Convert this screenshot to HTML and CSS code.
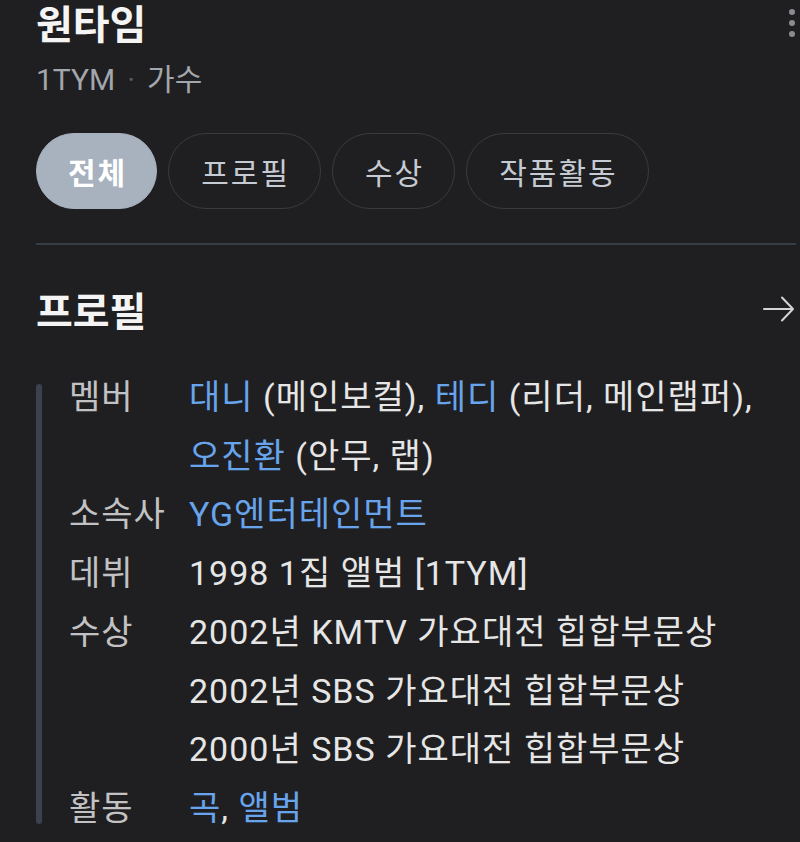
FILE: index.html
```html
<!DOCTYPE html>
<html lang="ko">
<head>
    <meta charset="UTF-8">
    <meta name="viewport" content="width=device-width, initial-scale=1.0">
    <title>원타임</title>
    <link rel="stylesheet" href="styles.css">
</head>
<body>
    <div id="page">
        <div id="header">
            <div id="title-block">
                <h1 id="title">원타임</h1>
                <div id="subtitle">1TYM<span class="dot">·</span>가수</div>
            </div>
            <div id="kebab">
                <span></span><span></span><span></span>
            </div>
        </div>

        <div id="tabs">
            <button class="chip active">전체</button>
            <button class="chip">프로필</button>
            <button class="chip">수상</button>
            <button class="chip">작품활동</button>
        </div>

        <div id="divider"></div>

        <div id="section-head">
            <h2>프로필</h2>
            <svg class="arrow" width="34" height="30" viewBox="0 0 34 30">
                <path d="M2 15 H31 M20 3.5 L31 15 L20 26.5" fill="none" stroke="#d4d4d4" stroke-width="2" stroke-linecap="round" stroke-linejoin="round"/>
            </svg>
        </div>

        <div id="profile">
            <div class="bar"></div>
            <div class="rows">
                <div class="row">
                    <div class="label">멤버</div>
                    <div class="value"><a>대니</a> (메인보컬), <a>테디</a> (리더, 메인랩퍼),<br><a>오진환</a> (안무, 랩)</div>
                </div>
                <div class="row">
                    <div class="label">소속사</div>
                    <div class="value"><a>YG엔터테인먼트</a></div>
                </div>
                <div class="row">
                    <div class="label">데뷔</div>
                    <div class="value">1998 1집 앨범 [1TYM]</div>
                </div>
                <div class="row">
                    <div class="label">수상</div>
                    <div class="value">2002년 KMTV 가요대전 힙합부문상<br>2002년 SBS 가요대전 힙합부문상<br>2000년 SBS 가요대전 힙합부문상</div>
                </div>
                <div class="row">
                    <div class="label">활동</div>
                    <div class="value"><a>곡</a>, <a>앨범</a></div>
                </div>
            </div>
        </div>
    </div>
</body>
</html>
```

FILE: styles.css
```css
body {
    margin: 0;
    background-color: #1f1f21;
    font-family: Roboto, "Noto Sans CJK KR", sans-serif;
    color: #e4e4e4;
}

#page {
    padding: 0 0 0 36px;
}

#header {
    display: flex;
    justify-content: space-between;
    align-items: flex-start;
}

#title {
    margin: 0;
    font-size: 40px;
    font-weight: 700;
    line-height: 52px;
    color: #f4f4f4;
}

#subtitle {
    font-size: 30px;
    line-height: 40px;
    color: #a2a6ad;
    margin-top: 8px;
}

#subtitle .dot {
    margin: 0 12px;
    color: #55585e;
}

#kebab {
    display: flex;
    flex-direction: column;
    gap: 5px;
    padding: 9px 5px 0 0;
}

#kebab span {
    width: 6px;
    height: 6px;
    border-radius: 50%;
    background-color: #8a8c90;
}

#tabs {
    display: flex;
    gap: 11px;
    margin-top: 33px;
}

.chip {
    height: 76px;
    padding: 0 30px 0 32px;
    border-radius: 38px;
    border: 1.5px solid #3a3b3f;
    background: none;
    color: #c6cbd3;
    font-family: "Noto Sans CJK KR", sans-serif;
    font-size: 30px;
    letter-spacing: 2px;
}

.chip.active {
    padding: 0 29px 0 31px;
    background-color: #a8b1be;
    border-color: #a8b1be;
    color: #ffffff;
    font-weight: 700;
}

#divider {
    height: 2px;
    background-color: #383c44;
    margin: 34px 4px 0 0;
}

#section-head {
    display: flex;
    justify-content: space-between;
    align-items: center;
    margin-top: 38px;
    padding-right: 4px;
}

#section-head h2 {
    margin: 0;
    font-family: "Noto Sans CJK KR", sans-serif;
    font-size: 40px;
    font-weight: 700;
    line-height: 52px;
    color: #f4f4f4;
}

#profile {
    display: flex;
    margin-top: 33px;
}

.bar {
    width: 6px;
    flex-shrink: 0;
    margin: 16px 0 14px;
    border-radius: 3px;
    background-color: #3b424e;
}

.rows {
    padding-left: 27px;
}

.row {
    display: flex;
    font-size: 34px;
    line-height: 58.7px;
    letter-spacing: 1px;
}

.label {
    width: 120px;
    flex-shrink: 0;
    color: #c2c2c4;
}

.value {
    color: #e6e6e6;
}

.value a {
    color: #68a4ec;
}
```
